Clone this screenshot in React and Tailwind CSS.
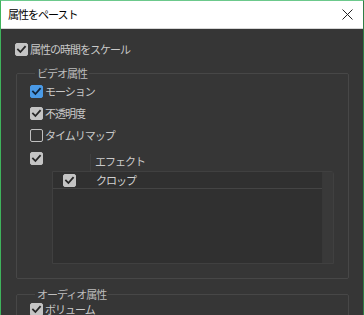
import React from "react";

const font = { fontFamily: '"Noto Sans CJK JP", "Noto Sans", sans-serif' };

function Box({ state = "on" }) {
  const cls =
    state === "blue"
      ? "bg-[#4a9ae6] border-[#4a9ae6]"
      : state === "on"
      ? "bg-[#c4c4c4] border-[#c4c4c4]"
      : "bg-[#363636] border-[#c0c0c0]";
  return (
    <span className={`w-[13px] h-[13px] shrink-0 rounded-[2px] border flex items-center justify-center ${cls}`}>
      {state !== "off" && (
        <svg width="11" height="11" viewBox="0 0 11 11">
          <path d="M2 5.6 L4.4 8 L9 2.8" fill="none" stroke={state === "blue" ? "#10243a" : "#262626"} strokeWidth="1.8" strokeLinecap="square" />
        </svg>
      )}
    </span>
  );
}

function Row({ state, label, className = "" }) {
  return (
    <div className={`flex items-center h-[13px] ${className}`}>
      <Box state={state} />
      <span className="ml-[2px] text-[11px] leading-[13px] tracking-[-1px] text-[#c9c9c9] whitespace-nowrap">{label}</span>
    </div>
  );
}

export default function App() {
  return (
    <div
      className="w-[364px] h-[315px] overflow-hidden bg-[#363636] border-t border-l border-r border-t-[#6cc98c] border-l-[#3fb35c] border-r-[#2e7d45] flex flex-col"
      style={font}
    >
      <div className="h-[28px] shrink-0 bg-white border-b border-[#d6d6d6] flex items-center justify-between pl-[7px] pr-[10px]">
        <span className="text-[11px] tracking-[-1px] text-black leading-none">属性をペースト</span>
        <svg width="11" height="11" viewBox="0 0 11 11">
          <path d="M0.5 0.5 L10.5 10.5 M10.5 0.5 L0.5 10.5" stroke="#222" strokeWidth="1" />
        </svg>
      </div>

      <div className="flex flex-col pl-[14px] pt-[14px]">
        <Row state="on" label="属性の時間をスケール" />

        <fieldset className="mt-[10px] ml-[1px] w-[333px] h-[213px] border border-[#474747] rounded-[2px] pl-[13px] pr-[13px] shrink-0">
          <legend className="ml-[5px] px-[2px] text-[11px] leading-[14px] tracking-[-1px] text-[#bdbdbd]">ビデオ属性</legend>
          <div className="flex flex-col gap-[9px] mt-[5px]">
            <Row state="blue" label="モーション" />
            <Row state="on" label="不透明度" />
            <Row state="off" label="タイムリマップ" />
          </div>
          <div className="flex mt-[4px]">
            <div className="pt-[6px]">
              <Box state="on" />
            </div>
            <div className="ml-[9px] flex flex-col w-[282px]">
              <div className="flex h-[25px]">
                <div className="w-[39px] mt-[8px] border-r border-[#404040]" />
                <span className="pl-[4px] pt-[9px] text-[11px] leading-[13px] tracking-[-1px] text-[#c9c9c9]">エフェクト</span>
              </div>
              <div className="flex h-[93px] border border-[#404040] rounded-tr-[3px] bg-[#3a3a3a]">
                <div className="flex-1 bg-[#303030]">
                  <div className="flex items-center h-[17px] border-b border-[#444444]">
                    <div className="w-[38px] pl-[10px] flex items-center">
                      <Box state="on" />
                    </div>
                    <span className="pl-[5px] text-[11px] leading-[13px] tracking-[-1px] text-[#d0d0d0]">クロップ</span>
                  </div>
                </div>
                <div className="w-[11px] bg-[#393939] border-l border-[#383838]" />
              </div>
            </div>
          </div>
        </fieldset>

        <fieldset className="mt-[8px] ml-[1px] w-[333px] h-[60px] border border-[#474747] rounded-[2px] pl-[13px] shrink-0">
          <legend className="ml-[5px] px-[2px] text-[11px] leading-[14px] tracking-[-1px] text-[#bdbdbd]">オーディオ属性</legend>
          <div className="mt-[2px]">
            <Row state="on" label="ボリューム" />
          </div>
        </fieldset>
      </div>
    </div>
  );
}
